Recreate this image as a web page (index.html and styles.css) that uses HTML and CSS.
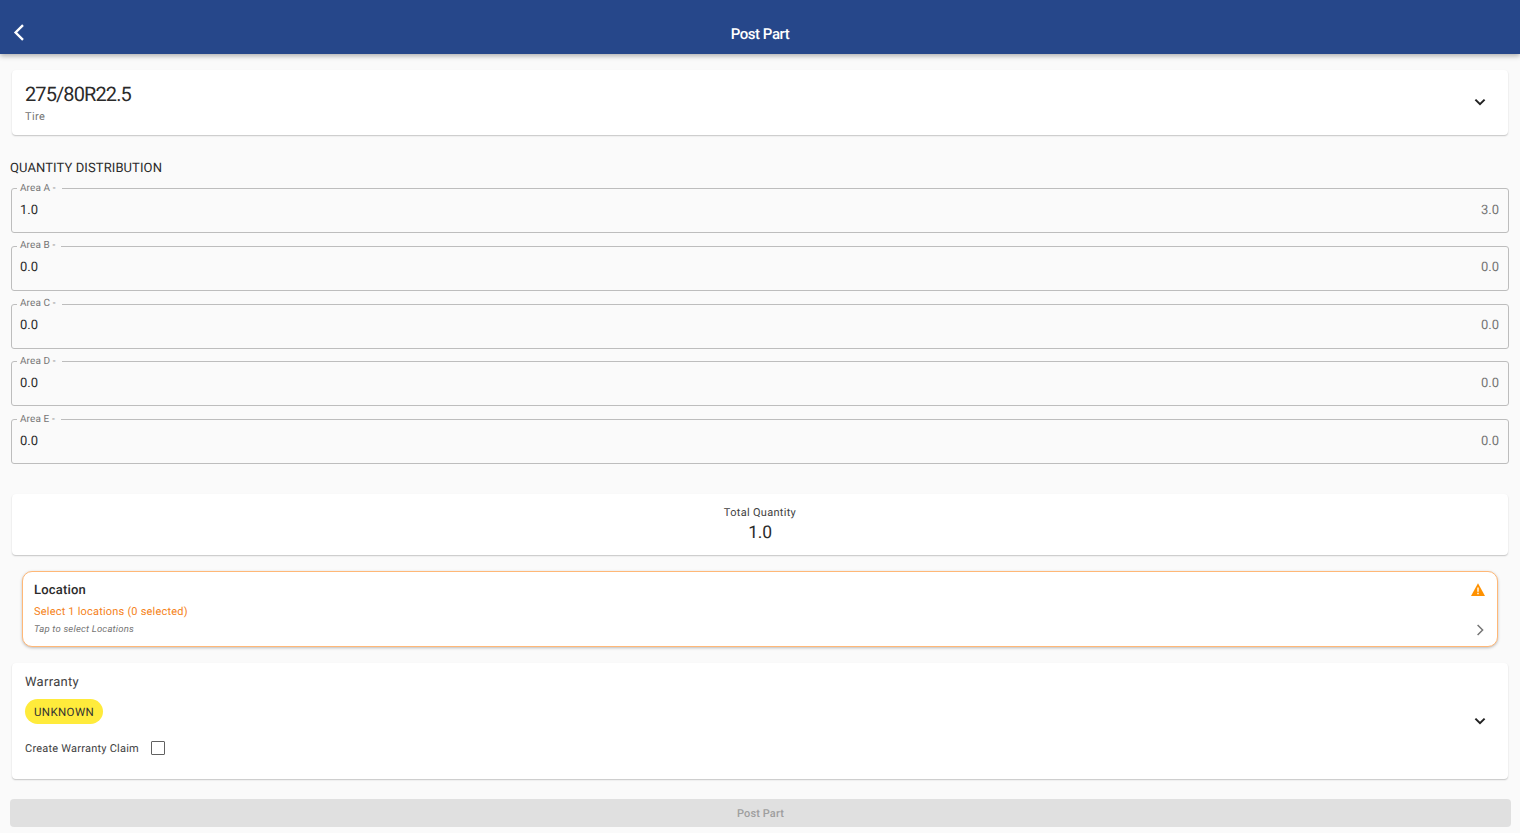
FILE: index.html
```html
<!DOCTYPE html>
<html lang="en">
<head>
<meta charset="utf-8">
<title>Post Part</title>
<link rel="stylesheet" href="styles.css">
</head>
<body>
<header class="appbar">
  <svg class="back" width="24" height="24" viewBox="0 0 24 24"><path d="M17 5.2 9.6 12.5 17 19.8" fill="none" stroke="#fff" stroke-width="2.4"/></svg>
  <h1 class="appbar-title">Post Part</h1>
</header>
<main class="content">
  <section class="card part">
    <div class="grow">
      <div class="part-name">275/80R22.5</div>
      <div class="part-type">Tire</div>
    </div>
    <svg class="chev" width="24" height="24" viewBox="0 0 24 24"><path d="M7.4 9.6 12 14.2l4.6-4.6" fill="none" stroke="#222" stroke-width="2"/></svg>
  </section>
  <h2 class="section-title">QUANTITY DISTRIBUTION</h2>
  <div class="fields">
    <div class="field"><span class="field-label">Area A -</span><span class="val">1.0</span><span class="max">3.0</span></div>
    <div class="field"><span class="field-label">Area B -</span><span class="val">0.0</span><span class="max">0.0</span></div>
    <div class="field"><span class="field-label">Area C -</span><span class="val">0.0</span><span class="max">0.0</span></div>
    <div class="field"><span class="field-label">Area D -</span><span class="val">0.0</span><span class="max">0.0</span></div>
    <div class="field"><span class="field-label">Area E -</span><span class="val">0.0</span><span class="max">0.0</span></div>
  </div>
  <section class="card total">
    <div class="total-label">Total Quantity</div>
    <div class="total-value">1.0</div>
  </section>
  <section class="location">
    <div class="loc-row">
      <div class="loc-title">Location</div>
      <svg width="18" height="18" viewBox="0 0 18 18"><path d="M10 1.2 3 14h14z" fill="#ff9100"/><path d="M9.3 5.5h1.4v4.3H9.3zM9.3 10.8h1.4v1.5H9.3z" fill="#fff"/></svg>
    </div>
    <div class="loc-sub">Select 1 locations (0 selected)</div>
    <div class="loc-row">
      <div class="loc-hint">Tap to select Locations</div>
      <svg class="loc-arrow" width="18" height="18" viewBox="0 0 18 18"><path d="m6.6 4 5 5-5 5" fill="none" stroke="#757575" stroke-width="1.5"/></svg>
    </div>
  </section>
  <section class="card warranty">
    <div class="grow">
      <div class="war-title">Warranty</div>
      <div class="chip">UNKNOWN</div>
      <div class="claim"><span>Create Warranty Claim</span><span class="checkbox"></span></div>
    </div>
    <svg class="chev" width="24" height="24" viewBox="0 0 24 24"><path d="M7.4 9.6 12 14.2l4.6-4.6" fill="none" stroke="#222" stroke-width="2"/></svg>
  </section>
  <button class="post" type="button">Post Part</button>
</main>
</body>
</html>
```
FILE: styles.css
```css
* { box-sizing: border-box; }
html, body { margin: 0; height: 100%; }
body {
  background: #fafafa;
  font-family: Roboto, "Liberation Sans", sans-serif;
  color: #2b2b2b;
  overflow: hidden;
  text-rendering: geometricPrecision;
}
.appbar {
  height: 54px;
  background: #26478a;
  box-shadow: 0 2px 5px rgba(0,0,0,.3);
  display: flex;
  align-items: center;
  justify-content: center;
  position: relative;
  padding-top: 13px;
}
.back { position: absolute; left: 6px; top: 20px; }
.appbar-title {
  margin: 0;
  color: #fff;
  font-size: 15px;
  font-weight: 500;
  line-height: 20px;
  letter-spacing: -.45px;
}
.content { padding: 16px 9px 0 10px; display: flex; flex-direction: column; }
.card {
  background: #fff;
  border-radius: 4px;
  box-shadow: 0 1px 1.5px rgba(0,0,0,.22);
  margin: 0 3px 0 2px;
}
.grow { flex: 1; min-width: 0; }
.part {
  height: 65px;
  padding: 10px 16px 0 13px;
  display: flex;
  align-items: center;
}
.part .grow { align-self: flex-start; }
.part .chev { margin-top: -12px; }
.part-name { font-size: 20px; line-height: 28px; letter-spacing: -.9px; }
.part-type { font-size: 11px; line-height: 18px; color: #757575; letter-spacing: .4px; }
.section-title {
  margin: 26px 0 0;
  font-size: 13px;
  font-weight: 400;
  line-height: 16px;
  letter-spacing: .1px;
}
.fields { display: flex; flex-direction: column; gap: 12.75px; margin: 11px 2px 0 1px; }
.field {
  height: 45px;
  border: 1px solid #bdbdbd;
  border-radius: 3px;
  position: relative;
  display: flex;
  justify-content: space-between;
  align-items: center;
  padding: 0 9px 1px 8px;
  font-size: 13px;
}
.field-label {
  position: absolute;
  left: 5px;
  top: -6.5px;
  background: #fafafa;
  padding: 0 6px 0 3px;
  font-size: 10px;
  line-height: 12px;
  letter-spacing: .1px;
  color: #757575;
}
.val { color: #2b2b2b; }
.max { color: #757575; }
.total {
  margin-top: 30px;
  height: 61px;
  text-align: center;
  padding-top: 11px;
}
.total-label { font-size: 11px; line-height: 16px; letter-spacing: .3px; color: #424242; }
.total-value { font-size: 17.5px; line-height: 24px; letter-spacing: -.2px; }
.location {
  margin: 16px 13px 0 12px;
  height: 76px;
  border: 1px solid #ffb877;
  border-radius: 10px;
  background: #fff;
  box-shadow: 0 1px 3px rgba(0,0,0,.25);
  padding: 10px 11px 0 11px;
}
.loc-row { display: flex; justify-content: space-between; align-items: center; }
.loc-title { font-size: 13px; font-weight: 500; line-height: 18px; letter-spacing: .2px; }
.loc-sub { font-size: 11px; line-height: 16px; color: #f58220; letter-spacing: .2px; margin-top: 4px; }
.loc-hint { font-size: 9.5px; line-height: 14px; font-style: italic; color: #757575; letter-spacing: .2px; }
.loc-sub + .loc-row { margin-top: 1px; }
.loc-arrow { margin-right: -3px; }
.warranty {
  margin-top: 16px;
  height: 116px;
  padding: 11px 16px 0 13px;
  display: flex;
  align-items: center;
}
.warranty .grow { align-self: flex-start; }
.warranty .chev { margin-top: -11px; }
.war-title { font-size: 13px; line-height: 18px; letter-spacing: .3px; color: #424242; }
.chip {
  display: inline-block;
  margin-top: 7px;
  height: 25px;
  padding: 0 9px;
  border-radius: 13px;
  background: #ffeb3b;
  color: #333;
  font-size: 11.5px;
  font-weight: 400;
  line-height: 26px;
  letter-spacing: .38px;
}
.claim { display: flex; align-items: center; gap: 12px; font-size: 11px; letter-spacing: .22px; color: #424242; margin-top: 12px; height: 24px; }
.checkbox { width: 14px; height: 14px; border: 1.5px solid #616161; border-radius: 1px; }
.post {
  margin: 20px 0 0;
  width: 1501px;
  height: 28px;
  border: 0;
  border-radius: 4px;
  background: #e0e0e0;
  color: #9e9e9e;
  font: 500 11px Roboto, "Liberation Sans", sans-serif;
  letter-spacing: .1px;
  text-rendering: geometricPrecision;
}
```
